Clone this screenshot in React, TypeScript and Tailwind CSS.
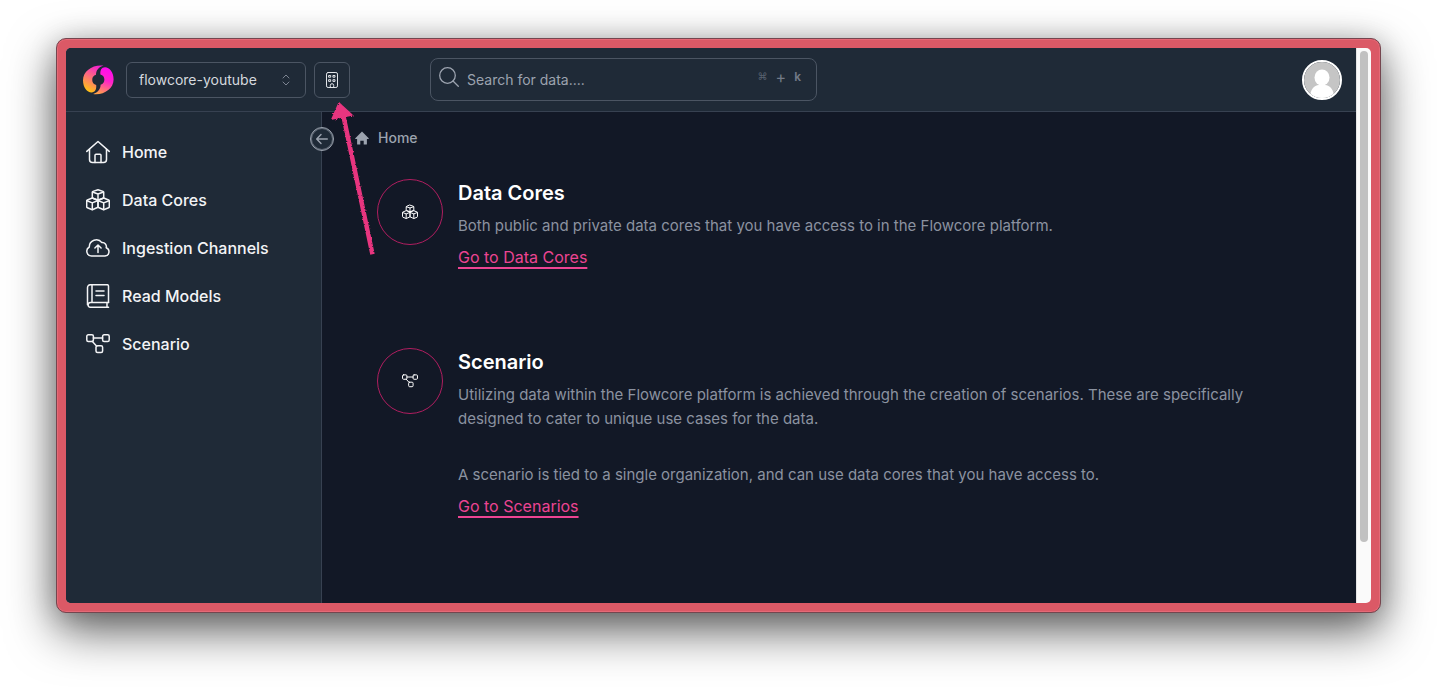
import type { ReactNode } from "react";

type IconProps = { className?: string };

function Svg({ className = "size-6", box = "0 0 24 24", width = 1.5, children }: IconProps & { box?: string; width?: number; children: ReactNode }) {
  return (
    <svg className={className} viewBox={box} fill="none" stroke="currentColor" strokeWidth={width} strokeLinecap="round" strokeLinejoin="round" aria-hidden="true">
      {children}
    </svg>
  );
}

function HomeIcon({ className }: IconProps) {
  return (
    <Svg className={className}>
      <path d="M.8 11.4 12 1.5l11.2 9.9" />
      <path d="M3.5 9.2v10.3a3 3 0 0 0 3 3h11a3 3 0 0 0 3-3V9.2" />
      <path d="M9 22.4v-7.2a1 1 0 0 1 1-1h4a1 1 0 0 1 1 1v7.2" />
    </Svg>
  );
}

function CubesIcon({ className }: IconProps) {
  return (
    <Svg className={className}>
      <path d="m12 1.7 5 1.7q.7.3.7 1V10L12 12.2 6.3 10V4.400q0-.7.7-1z" />
      <path d="m6.500 4 5.500 2 5.500-2M12 6v6" />
      <path d="m6.300 10-4.900 2q-.7.3-.7 1v5.800q0 .7.7 1l4.900 2 5.700-2.600v-7z" />
      <path d="m1 12.700 5.300 2.200 5.700-2.400M6.300 15v6.600" />
      <path d="m17.700 10 4.900 2q.7.3.7 1v5.800q0 .7-.7 1l-4.900 2-5.700-2.600v-7z" />
      <path d="m23 12.700-5.300 2.200-5.700-2.400M17.700 15v6.600" />
    </Svg>
  );
}

function CloudIcon({ className }: IconProps) {
  return (
    <Svg className={className}>
      <path d="M5.500 20a4.800 4.800 0 0 1-2.200-9A7 7 0 0 1 15.900 6.600a4 4 0 0 1 4.300 5.100A4.300 4.300 0 0 1 19 20z" />
      <path d="M12 16.500V9.200M8.900 12 12 9l3.100 3" />
    </Svg>
  );
}

function BookIcon({ className }: IconProps) {
  return (
    <Svg className={className}>
      <path d="M22.500 18.500V2a1.300 1.300 0 0 0-1.300-1.300H4.500a3 3 0 0 0-3 3v17" />
      <path d="M22.500 18.500h-18a2.400 2.400 0 0 0 0 4.800h18M21 18.500v4.800M6 .8v17.700M10 7h8M10 11.500h8" />
    </Svg>
  );
}

function NetworkIcon({ className }: IconProps) {
  return (
    <Svg className={className}>
      <rect x=".8" y="2.800" width="6.600" height="6.600" rx="1.500" />
      <rect x="16.600" y="2.800" width="6.600" height="6.600" rx="1.500" />
      <rect x="10" y="13.800" width="6.600" height="6.800" rx="1.500" />
      <path d="M7.400 6h9.200M6.200 9.200l4.500 5" />
    </Svg>
  );
}

function BuildingIcon() {
  return (
    <Svg className="size-4 shrink-0" box="0 0 16 16" width={1}>
      <rect x="2.500" y=".5" width="11" height="15" rx="1.600" />
      <path d="M6.300 15.400v-2a1.700 1.700 0 0 1 3.400 0v2" />
      <path d="M5 3.500h1.700v1.700H5zM9.300 3.500H11v1.700H9.300zM5 7.700h1.700v1.700H5zM9.300 7.700H11v1.700H9.300z" />
    </Svg>
  );
}

const swirl = "M21.500 1.600C11 .2 1 6.800 1 16.200c0 7.200 4 12.200 8.600 12.200 3.600 0 5-3.200 4.600-7.400A5.300 5.300 0 0 1 14 10.800C14 6.600 16.500 3.200 21.500 1.600z";

function Logo() {
  return (
    <svg className="size-8 shrink-0" viewBox="0 0 32 32" role="img" aria-label="Flowcore">
      <defs>
        <linearGradient id="flow-left" x1="0.7" y1="0" x2="0.3" y2="1">
          <stop offset="0" stopColor="#f51fd2" />
          <stop offset=".5" stopColor="#fd7276" />
          <stop offset="1" stopColor="#ffc512" />
        </linearGradient>
        <linearGradient id="flow-right" x1="0.35" y1="1" x2="0.65" y2="0">
          <stop offset="0" stopColor="#ff0af2" />
          <stop offset=".45" stopColor="#ff22cb" />
          <stop offset="1" stopColor="#ffa04a" />
        </linearGradient>
      </defs>
      <path d={swirl} fill="url(#flow-left)" />
      <path d={swirl} fill="url(#flow-right)" transform="rotate(180 16.300 15.800)" />
    </svg>
  );
}

function Avatar() {
  return (
    <svg className="size-full" viewBox="0 0 36 36" aria-hidden="true">
      <rect width="36" height="36" fill="#c5c5c5" />
      <ellipse cx="18" cy="15.500" rx="7.500" ry="8" fill="#fff" />
      <path d="M6 36c0-8 4-13 9-13h6c5 0 9 5 9 13z" fill="#fff" />
    </svg>
  );
}

function Arrow() {
  return (
    <svg className="pointer-events-none absolute left-[262px] top-[50px] h-[162px] w-[52px]" viewBox="0 0 52 162" aria-hidden="true">
      <defs>
        <filter id="chalk" x="-10%" y="-5%" width="120%" height="110%">
          <feTurbulence type="fractalNoise" baseFrequency="0.6" numOctaves="2" seed="4" result="noise" />
          <feDisplacementMap in="SourceGraphic" in2="noise" scale="3" />
        </filter>
      </defs>
      <g filter="url(#chalk)" fill="#e8357f" stroke="#e8357f" strokeLinejoin="round">
        <path d="M15 16 44 154" strokeWidth="4.500" fill="none" strokeLinecap="square" />
        <path d="M11 5 4 21 24 17z" strokeWidth="1.500" />
      </g>
    </svg>
  );
}

const navItems = [
  { label: "Home", Icon: HomeIcon },
  { label: "Data Cores", Icon: CubesIcon },
  { label: "Ingestion Channels", Icon: CloudIcon },
  { label: "Read Models", Icon: BookIcon },
  { label: "Scenario", Icon: NetworkIcon },
];

function Section({ title, icon, link, children }: { title: string; icon: ReactNode; link: string; children: ReactNode }) {
  return (
    <section className="flex items-start gap-[15px]">
      <div className="flex size-[66px] shrink-0 items-center justify-center rounded-full border border-[#b01e60] text-white">{icon}</div>
      <div className="min-w-0 flex-1">
        <h2 className="text-xl font-semibold leading-7 text-white">{title}</h2>
        <div className="mt-[7px] flex flex-col gap-8 text-[15px] leading-6 text-[#8b92a0]">{children}</div>
        <a href="#" className="mt-[7px] block w-fit leading-6 text-[#ec4492] underline decoration-2 underline-offset-4 [text-decoration-skip-ink:none]">{link}</a>
      </div>
    </section>
  );
}

export default function App() {
  return (
    <div className="flex min-h-screen bg-white px-14 pb-[74px] pt-[38px] font-['Inter','Liberation_Sans',sans-serif]">
      <div className="flex min-w-0 flex-1 rounded-[10px] border border-[#74464f] bg-[#db5966] p-[9px] shadow-[inset_0_0_0_1px_#e56a77,0_18px_48px_rgba(0,0,0,0.6),0_4px_28px_rgba(0,0,0,0.2)]">
        <div className="relative flex min-w-0 flex-1 overflow-hidden rounded-[5px] bg-[#fafafa]">
          <div className="flex min-w-0 flex-1 flex-col bg-[#121826]">
            <header className="flex h-16 items-center border-b border-[#374151] bg-[#1f2a37] pl-4 pr-3.5">
              <Logo />
              <div className="relative ml-3 w-[180px]">
                <select aria-label="Organization" className="block h-9 w-full appearance-none rounded-md border border-[#4b5563] bg-[#1f2a37] px-3 text-sm text-[#d5d9df]">
                  <option>flowcore-youtube</option>
                </select>
                <svg className="pointer-events-none absolute right-4 top-3 h-3 w-2" viewBox="0 0 8 12" fill="none" stroke="#7c8492" strokeWidth="1" strokeLinecap="round" strokeLinejoin="round" aria-hidden="true">
                  <path d="m1 4 3-3 3 3M1 8l3 3 3-3" />
                </svg>
              </div>
              <button type="button" aria-label="Organization details" className="ml-2 flex size-9 items-center justify-center rounded-md border border-[#4b5563] text-[#e2e5e9]">
                <BuildingIcon />
              </button>
              <label className="ml-20 flex h-[43px] w-[387px] items-start rounded-lg border border-[#4b5563] pl-2 pr-[15px]">
                <svg className="mt-2 size-5 shrink-0" viewBox="0 0 20 20" fill="none" stroke="#9ca3af" strokeWidth="1.300" strokeLinecap="round" aria-hidden="true">
                  <circle cx="8.500" cy="8.500" r="7.800" />
                  <path d="m14 14 5.300 5.300" />
                </svg>
                <input type="text" aria-label="Search" placeholder="Search for data...." className="ml-2 h-[41px] min-w-0 flex-1 bg-transparent text-sm text-white outline-none placeholder:text-[#9ca3af]" />
                <span className="mt-2 flex items-center gap-2 text-xs leading-5 text-[#727a87]">
                  <span className="font-['DejaVu_Sans',sans-serif] text-[10px] text-[#596270]">⌘</span>
                  <span className="text-base leading-5">+</span>
                  <span className="font-semibold">k</span>
                </span>
              </label>
              <button type="button" aria-label="Account" className="ml-auto size-10 overflow-hidden rounded-full border-2 border-white">
                <Avatar />
              </button>
            </header>
            <div className="flex flex-1">
              <aside className="relative w-64 shrink-0 border-r border-[#374151] bg-[#1f2a37] pl-5 pt-4">
                <nav className="flex flex-col">
                  {navItems.map(({ label, Icon }) => (
                    <a key={label} href="#" className="flex h-12 items-center gap-3 font-medium text-[#f3f4f6]">
                      <Icon className="size-6 shrink-0" />
                      {label}
                    </a>
                  ))}
                </nav>
                <button type="button" aria-label="Collapse sidebar" className="absolute -right-[13px] top-[15px] flex size-6 items-center justify-center rounded-full border border-[#9ca3af] bg-[#1f2a37] text-[#9ca3af] shadow-[inset_0_0_0_1px_#5d6673]">
                  <Svg className="size-3 shrink-0" box="0 0 12 12" width={1.4}>
                    <path d="M11.300 6H.8M5 1.500.7 6 5 10.500" />
                  </Svg>
                </button>
              </aside>
              <main className="min-w-0 flex-1 pl-[33px] pr-16 pt-4">
                <nav aria-label="Breadcrumb" className="flex h-5 items-center gap-[9px] text-sm font-medium text-[#9ca3af]">
                  <svg className="size-3.5" viewBox="0 0 14 14" fill="currentColor" aria-hidden="true">
                    <path d="M7 .4.3 7.200c-.3.4 0 .8.4.8h1.400v5q0 .6.6.6h2.600V9.800h3.400v3.800h2.600q.6 0 .6-.6V8h1.400c.4 0 .7-.4.4-.8z" />
                  </svg>
                  <a href="#">Home</a>
                </nav>
                <div className="mt-[31px] flex flex-col gap-[79px] pl-[22px]">
                  <Section title="Data Cores" icon={<CubesIcon className="size-4" />} link="Go to Data Cores">
                    <p>Both public and private data cores that you have access to in the Flowcore platform.</p>
                  </Section>
                  <Section title="Scenario" icon={<NetworkIcon className="size-4" />} link="Go to Scenarios">
                    <p>Utilizing data within the Flowcore platform is achieved through the creation of scenarios. These are specifically designed to cater to unique use cases for the data.</p>
                    <p>A scenario is tied to a single organization, and can use data cores that you have access to.</p>
                  </Section>
                </div>
              </main>
            </div>
          </div>
          <div className="flex w-[15px] shrink-0 flex-col items-center border-l border-[#e5e5e5] pt-[3px]">
            <div className="h-[89%] w-2 rounded-full bg-[#c1c1c1]" />
          </div>
          <Arrow />
        </div>
      </div>
    </div>
  );
}
